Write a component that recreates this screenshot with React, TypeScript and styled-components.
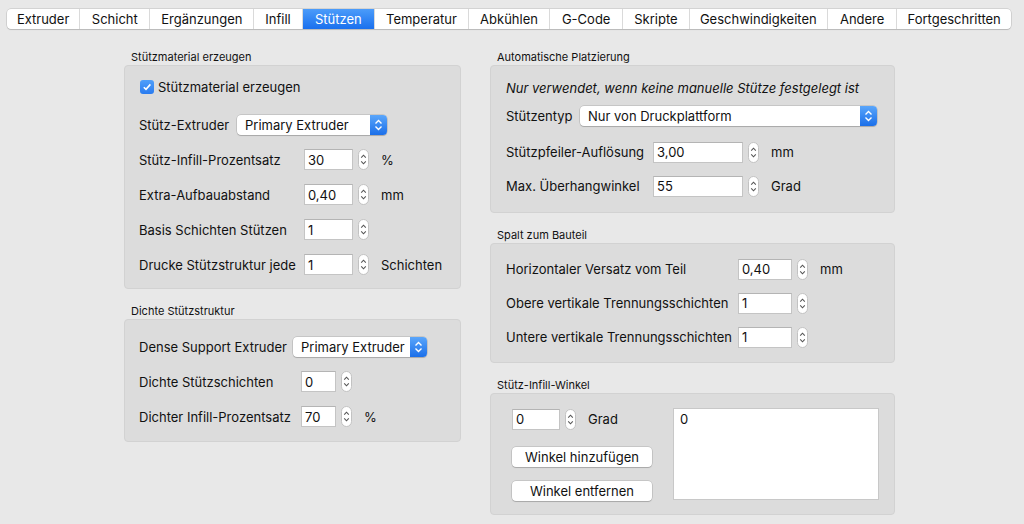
import styled, { createGlobalStyle } from 'styled-components';

const GlobalStyle = createGlobalStyle`
  body {
    margin: 0;
    background: #e8e8e8;
    font-family: Inter, "Liberation Sans", sans-serif;
    font-size: 13px;
    color: #111;
  }
`;

const tabs: [string, number][] = [
    ['Extruder', 73], ['Schicht', 70], ['Ergänzungen', 104], ['Infill', 48],
    ['Stützen', 72], ['Temperatur', 94], ['Abkühlen', 81], ['G-Code', 73],
    ['Skripte', 66], ['Geschwindigkeiten', 139], ['Andere', 69], ['Fortgeschritten', 115],
];

function Stepper() {
    return (
        <StepperSvg width="11" height="21" viewBox="0 0 11 21">
            <rect x="0.5" y="0.5" width="10" height="20" rx="5" fill="#fff" stroke="#c2c2c2" />
            <path d="M3.2 8.6 L5.5 6.2 L7.8 8.6" fill="none" stroke="#555" strokeWidth="1.1" />
            <path d="M3.2 12.4 L5.5 14.8 L7.8 12.4" fill="none" stroke="#555" strokeWidth="1.1" />
        </StepperSvg>
    );
}

function Popup({ text, w }: { text: string; w: number }) {
    return (
        <PopupBox $w={w}>
            <PopupText>{text}</PopupText>
            <PopupArrows>
                <svg width="17" height="20" viewBox="0 0 17 20">
                    <path d="M5.5 8.5 L8.5 5.5 L11.5 8.5" fill="none" stroke="#fff" strokeWidth="1.4" />
                    <path d="M5.5 11.5 L8.5 14.5 L11.5 11.5" fill="none" stroke="#fff" strokeWidth="1.4" />
                </svg>
            </PopupArrows>
        </PopupBox>
    );
}

function NumRow({ label, lw, value, fw, unit, h = 35, mt = 0 }: {
    label: string; lw: number; value: string; fw: number; unit?: string; h?: number; mt?: number;
}) {
    return (
        <Row $h={h} $mt={mt}>
            <Label $w={lw}>{label}</Label>
            <Field $w={fw}>{value}</Field>
            <Stepper />
            {unit && <Unit>{unit}</Unit>}
        </Row>
    );
}

function App() {
    return (
        <Window>
            <GlobalStyle />
            <TabBar>
                {tabs.map(([name, w]) => (
                    <Tab key={name} $w={w} $active={name === 'Stützen'}>{name}</Tab>
                ))}
            </TabBar>

            <Columns>
                <Column $w={337}>
                    <Group>
                        <GroupTitle>Stützmaterial erzeugen</GroupTitle>
                        <GroupBox $pad="4px 14px 6px">
                            <Row $h={34}>
                                <CheckBox>
                                    <svg width="10" height="10" viewBox="0 0 10 10">
                                        <path d="M1.8 5.2 L4 7.4 L8.4 2.4" fill="none" stroke="#fff" strokeWidth="1.6" />
                                    </svg>
                                </CheckBox>
                                <span>Stützmaterial erzeugen</span>
                            </Row>
                            <Row $h={34} $mt={4}>
                                <Label $w={98}>Stütz-Extruder</Label>
                                <Popup text="Primary Extruder" w={150} />
                            </Row>
                            <NumRow label="Stütz-Infill-Prozentsatz" lw={165} value="30" fw={49} unit="%" />
                            <NumRow label="Extra-Aufbauabstand" lw={165} value="0,40" fw={49} unit="mm" />
                            <NumRow label="Basis Schichten Stützen" lw={165} value="1" fw={49} />
                            <NumRow label="Drucke Stützstruktur jede" lw={165} value="1" fw={49} unit="Schichten" />
                        </GroupBox>
                    </Group>

                    <Group>
                        <GroupTitle>Dichte Stützstruktur</GroupTitle>
                        <GroupBox $pad="9px 14px 7px">
                            <Row $h={35}>
                                <Label $w={154}>Dense Support Extruder</Label>
                                <Popup text="Primary Extruder" w={134} />
                            </Row>
                            <NumRow label="Dichte Stützschichten" lw={162} value="0" fw={35} />
                            <NumRow label="Dichter Infill-Prozentsatz" lw={162} value="70" fw={35} unit="%" />
                        </GroupBox>
                    </Group>
                </Column>

                <Column $w={405}>
                    <Group>
                        <GroupTitle>Automatische Platzierung</GroupTitle>
                        <GroupBox $pad="8px 15px 9px">
                            <Row $h={28}>
                                <Note>Nur verwendet, wenn keine manuelle Stütze festgelegt ist</Note>
                            </Row>
                            <Row $h={28}>
                                <Label $w={74}>Stützentyp</Label>
                                <Popup text="Nur von Druckplattform" w={297} />
                            </Row>
                            <NumRow label="Stützpfeiler-Auflösung" lw={147} value="3,00" fw={90} unit="mm" h={34} mt={5} />
                            <NumRow label="Max. Überhangwinkel" lw={147} value="55" fw={90} unit="Grad" h={34} />
                        </GroupBox>
                    </Group>

                    <Group>
                        <GroupTitle>Spalt zum Bauteil</GroupTitle>
                        <GroupBox $pad="8px 15px 8px">
                            <NumRow label="Horizontaler Versatz vom Teil" lw={232} value="0,40" fw={54} unit="mm" h={34} />
                            <NumRow label="Obere vertikale Trennungsschichten" lw={232} value="1" fw={54} h={34} />
                            <NumRow label="Untere vertikale Trennungsschichten" lw={232} value="1" fw={54} h={34} />
                        </GroupBox>
                    </Group>

                    <Group>
                        <GroupTitle>Stütz-Infill-Winkel</GroupTitle>
                        <AngleBox>
                            <AngleControls>
                                <Row $h={22}>
                                    <Field $w={48}>0</Field>
                                    <Stepper />
                                    <Unit>Grad</Unit>
                                </Row>
                                <PushButton $mt={17}>Winkel hinzufügen</PushButton>
                                <PushButton $mt={14}>Winkel entfernen</PushButton>
                            </AngleControls>
                            <ListBox>0</ListBox>
                        </AngleBox>
                    </Group>
                </Column>
            </Columns>
        </Window>
    );
}

export default App;

const Window = styled.div`
    width: 1024px;
    height: 524px;
    overflow: hidden;
    padding-top: 9px;
    box-sizing: border-box;
`;

const TabBar = styled.div`
    display: flex;
    margin-left: 7px;
    width: 1004px;
    height: 20px;
    background: #fff;
    border-radius: 4px;
    box-shadow: 0 0 0 0.5px rgba(0, 0, 0, 0.18), 0 1px 1px rgba(0, 0, 0, 0.12);
    overflow: hidden;
`;

const Tab = styled.div<{ $w: number; $active?: boolean }>`
    width: ${p => p.$w}px;
    display: flex;
    align-items: center;
    justify-content: center;
    font-size: 13px;
    white-space: nowrap;
    color: ${p => (p.$active ? '#fff' : '#111')};
    background: ${p => (p.$active ? 'linear-gradient(#4b9cfa, #1a70ee)' : 'transparent')};

    & + & {
        border-left: 1px solid #dadada;
    }
`;

const Columns = styled.div`
    display: flex;
    gap: 29px;
    margin: 22px 0 0 124px;
`;

const Column = styled.div<{ $w: number }>`
    width: ${p => p.$w}px;
    display: flex;
    flex-direction: column;
    gap: 16px;
`;

const Group = styled.div`
    display: flex;
    flex-direction: column;
`;

const GroupTitle = styled.div`
    font-size: 11px;
    line-height: 13px;
    height: 13px;
    padding-left: 7px;
    margin-bottom: 1px;
    color: #111;
`;

const GroupBox = styled.div<{ $pad: string }>`
    display: flex;
    flex-direction: column;
    padding: ${p => p.$pad};
    background: #dcdcdc;
    border: 1px solid #d2d2d2;
    border-radius: 4px;
`;

const Row = styled.div<{ $h: number; $mt?: number }>`
    display: flex;
    align-items: center;
    height: ${p => p.$h}px;
    margin-top: ${p => p.$mt ?? 0}px;
    white-space: nowrap;
`;

const Label = styled.div<{ $w: number }>`
    width: ${p => p.$w}px;
    flex-shrink: 0;
`;

const Field = styled.div<{ $w: number }>`
    width: ${p => p.$w}px;
    height: 21px;
    box-sizing: border-box;
    background: #fff;
    border: 1px solid #c4c4c4;
    border-top-color: #b4b4b4;
    padding: 0 3px;
    display: flex;
    align-items: center;
    font-size: 13px;
`;

const StepperSvg = styled.svg`
    margin-left: 5px;
    flex-shrink: 0;
`;

const Unit = styled.span`
    margin-left: 12px;
`;

const PopupBox = styled.div<{ $w: number }>`
    width: ${p => p.$w}px;
    height: 20px;
    display: flex;
    background: #fff;
    border-radius: 4px;
    box-shadow: 0 0 0 0.5px rgba(0, 0, 0, 0.2), 0 1px 1px rgba(0, 0, 0, 0.15);
    overflow: hidden;
`;

const PopupText = styled.div`
    flex: 1;
    padding-left: 8px;
    display: flex;
    align-items: center;
`;

const PopupArrows = styled.div`
    width: 17px;
    height: 20px;
    background: linear-gradient(#5aa6fb, #1b6fe9);
    display: flex;
`;

const CheckBox = styled.div`
    width: 14px;
    height: 14px;
    margin: 0 4px 0 1px;
    border-radius: 3px;
    background: linear-gradient(#4f9ffa, #2a7cf0);
    display: flex;
    align-items: center;
    justify-content: center;
`;

const Note = styled.span`
    font-style: italic;
`;

const AngleBox = styled.div`
    display: flex;
    padding: 14px 15px 13px 21px;
    background: #dcdcdc;
    border: 1px solid #d2d2d2;
    border-radius: 4px;
`;

const AngleControls = styled.div`
    width: 161px;
    display: flex;
    flex-direction: column;
`;

const PushButton = styled.div<{ $mt: number }>`
    width: 140px;
    height: 20px;
    margin-top: ${p => p.$mt}px;
    background: #fff;
    border-radius: 4px;
    box-shadow: 0 0 0 0.5px rgba(0, 0, 0, 0.2), 0 1px 1px rgba(0, 0, 0, 0.15);
    display: flex;
    align-items: center;
    justify-content: center;
`;

const ListBox = styled.div`
    width: 206px;
    height: 92px;
    box-sizing: border-box;
    background: #fff;
    border: 1px solid #c8c8c8;
    padding: 2px 6px;
`;
